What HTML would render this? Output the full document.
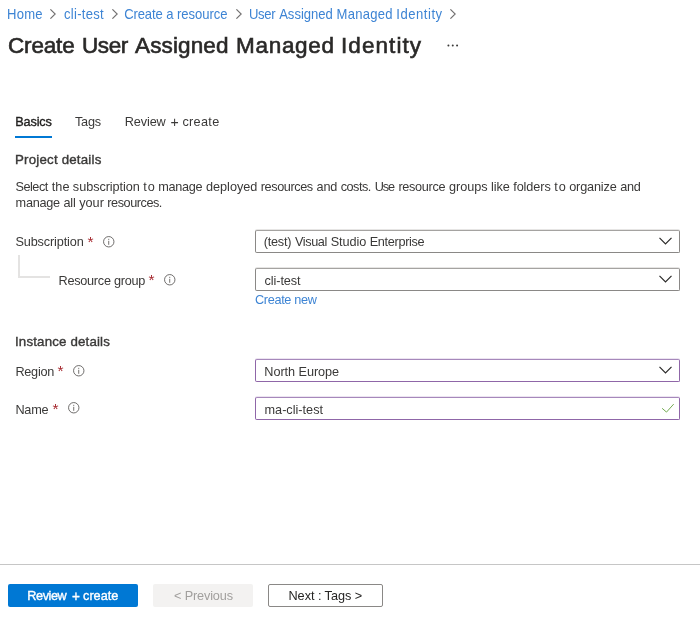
<!DOCTYPE html>
<html><head><meta charset="utf-8">
<style>
*{box-sizing:border-box;margin:0;padding:0}
html,body{width:700px;height:619px;background:#fff;overflow:hidden}
body{will-change:transform;filter:blur(0.4px);font-family:"Liberation Sans",sans-serif;color:#323130;position:relative;font-size:12.6px}
.t{position:absolute;white-space:nowrap;line-height:18px;font-size:13.5px;color:#3a3938;transform:scaleX(0.94);transform-origin:0 0}
.nt{transform:none}
.bc{color:#3d84d4;font-size:13.9px;top:5px}
.cv{position:absolute;top:8.6px;width:6px;height:10px}
.hh{top:31px;font-size:22.5px;line-height:30px;color:#2a2928}
.sb.hh{-webkit-text-stroke:0.62px currentColor}
.sb{-webkit-text-stroke:0.38px currentColor}
.req{position:absolute;color:#a4262c;font-size:15.5px;line-height:18px}
.info{position:absolute;width:12px;height:12px}
.box{position:absolute;left:255px;width:425px;height:23px;border:1px solid #8a8886;border-top-color:#a5a3a1;border-radius:2px;background:#fff;box-shadow:0 -1px 0 -0px #e6e5e4}
.box.p2{border-color:#8f66a8;border-top-color:#a688bb;box-shadow:0 -1px 0 0 #ece4f1}
.box svg{position:absolute}
.link{color:#3d84d4}
.foot{position:absolute;left:0;top:564px;width:700px;height:1px;background:#c6c6c6}
.btn{position:absolute;top:584px;height:23px;border-radius:2px}
</style></head><body>
<div id="b1" class="t bc" style="left:7px;letter-spacing:0.248px;transform:translate(0.00px,0.00px) scaleX(0.94)">Home</div>
<svg class="cv" style="left:50.4px" viewBox="0 0 6 10"><path d="M0.4 0.3 L5.2 5 L0.4 9.7" fill="none" stroke="#727070" stroke-width="1.1"/></svg>
<div id="b2" class="t bc" style="left:64px;letter-spacing:0.294px;transform:translate(0.00px,0.00px) scaleX(0.94)">cli-test</div>
<svg class="cv" style="left:111.5px" viewBox="0 0 6 10"><path d="M0.4 0.3 L5.2 5 L0.4 9.7" fill="none" stroke="#727070" stroke-width="1.1"/></svg>
<div id="b3w0" class="t bc" style="left:124px;letter-spacing:-0.170px;transform:translate(0.30px,0.00px) scaleX(0.94)">Create</div><div id="b3w1" class="t bc" style="left:166px;letter-spacing:-0.468px;transform:translate(0.37px,0.00px) scaleX(0.94)">a</div><div id="b3w2" class="t bc" style="left:176px;letter-spacing:-0.013px;transform:translate(0.88px,0.00px) scaleX(0.94)">resource</div>
<svg class="cv" style="left:236px" viewBox="0 0 6 10"><path d="M0.4 0.3 L5.2 5 L0.4 9.7" fill="none" stroke="#727070" stroke-width="1.1"/></svg>
<div id="b4w0" class="t bc" style="left:248px;letter-spacing:-0.343px;transform:translate(0.90px,0.00px) scaleX(0.94)">User</div><div id="b4w1" class="t bc" style="left:279px;letter-spacing:-0.006px;transform:translate(0.17px,0.00px) scaleX(0.94)">Assigned</div><div id="b4w2" class="t bc" style="left:336px;letter-spacing:0.291px;transform:translate(0.54px,0.00px) scaleX(0.94)">Managed</div><div id="b4w3" class="t bc" style="left:396px;letter-spacing:0.559px;transform:translate(0.31px,0.00px) scaleX(0.94)">Identity</div>
<svg class="cv" style="left:450px" viewBox="0 0 6 10"><path d="M0.4 0.3 L5.2 5 L0.4 9.7" fill="none" stroke="#727070" stroke-width="1.1"/></svg>

<div id="h1a" class="t sb hh nt" style="left:8px;letter-spacing:-0.166px">Create</div>
<div id="h1b" class="t sb hh nt" style="left:82px;letter-spacing:-0.409px">User</div>
<div id="h1c" class="t sb hh nt" style="left:135px;letter-spacing:0.133px">Assigned</div>
<div id="h1d" class="t sb hh nt" style="left:236px;letter-spacing:0.709px">Managed</div>
<div id="h1e" class="t sb hh nt" style="left:341px;letter-spacing:1.079px">Identity</div>
<svg style="position:absolute;left:446.5px;top:44px" width="12" height="3.2" viewBox="0 0 12 3.2"><circle cx="1.4" cy="1.6" r="1" fill="#3b3a39"/><circle cx="5.75" cy="1.6" r="1" fill="#3b3a39"/><circle cx="10.1" cy="1.6" r="1" fill="#3b3a39"/></svg>

<div id="t1" class="t sb" style="color:#201f1e;top:113px;left:15px;letter-spacing:-0.160px;transform:translate(0.23px,0.00px) scaleX(0.94)">Basics</div>
<div id="t2" class="t" style="top:113px;left:75px;letter-spacing:-0.267px;transform:translate(0.00px,0.00px) scaleX(0.94)">Tags</div>
<div id="t3a" class="t" style="top:113px;left:124px;letter-spacing:-0.141px;transform:translate(0.79px,0.00px) scaleX(0.94)">Review</div><div id="t3b" class="t" style="top:113px;letter-spacing:0px;left:170px;font-size:14.96px;transform:translate(0.43px,0.00px) scaleX(0.94)">+</div><div id="t3c" class="t" style="top:113px;left:182px;letter-spacing:0.328px;transform:translate(0.42px,0.00px) scaleX(0.94)">create</div>
<div style="position:absolute;left:15px;top:136px;width:37px;height:2px;background:#0078d4"></div>

<div id="s1" class="t sb nt" style="top:151px;font-size:13.3px;left:15px;letter-spacing:0.200px">Project details</div>
<div id="p1w0" class="t" style="top:178px;left:15px;letter-spacing:-0.559px;transform:translate(0.60px,0.00px) scaleX(0.94)">Select</div>
<div id="p1w1" class="t" style="top:178px;left:51px;letter-spacing:0.072px;transform:translate(0.67px,0.00px) scaleX(0.94)">the</div>
<div id="p1w2" class="t" style="top:178px;left:72px;letter-spacing:-0.072px;transform:translate(0.87px,0.00px) scaleX(0.94)">subscription</div>
<div id="p1w3" class="t" style="top:178px;left:143px;letter-spacing:0.990px;transform:translate(0.26px,0.00px) scaleX(0.94)">to</div>
<div id="p1w4" class="t" style="top:178px;left:158px;letter-spacing:-0.308px;transform:translate(0.20px,0.00px) scaleX(0.94)">manage</div>
<div id="p1w5" class="t" style="top:178px;left:206px;letter-spacing:-0.028px;transform:translate(0.03px,0.00px) scaleX(0.94)">deployed</div>
<div id="p1w6" class="t" style="top:178px;left:260px;letter-spacing:-0.443px;transform:translate(0.78px,0.00px) scaleX(0.94)">resources</div>
<div id="p1w7" class="t" style="top:178px;left:316px;letter-spacing:-0.250px;transform:translate(0.59px,0.00px) scaleX(0.94)">and</div>
<div id="p1w8" class="t" style="top:178px;left:340px;letter-spacing:-0.553px;transform:translate(0.72px,0.00px) scaleX(0.94)">costs.</div>
<div id="p1w9" class="t" style="top:178px;left:374px;letter-spacing:-1.173px;transform:translate(0.68px,0.00px) scaleX(0.94)">Use</div>
<div id="p1w10" class="t" style="top:178px;left:398px;letter-spacing:-0.346px;transform:translate(0.46px,0.00px) scaleX(0.94)">resource</div>
<div id="p1w11" class="t" style="top:178px;left:448px;letter-spacing:-0.037px;transform:translate(0.97px,0.00px) scaleX(0.94)">groups</div>
<div id="p1w12" class="t" style="top:178px;left:491px;letter-spacing:-0.110px;transform:translate(0.01px,0.00px) scaleX(0.94)">like</div>
<div id="p1w13" class="t" style="top:178px;left:513px;letter-spacing:-0.074px;transform:translate(0.17px,0.00px) scaleX(0.94)">folders</div>
<div id="p1w14" class="t" style="top:178px;left:554px;letter-spacing:1.000px;transform:translate(0.26px,0.00px) scaleX(0.94)">to</div>
<div id="p1w15" class="t" style="top:178px;left:569px;letter-spacing:-0.178px;transform:translate(0.20px,0.00px) scaleX(0.94)">organize</div>
<div id="p1w16" class="t" style="top:178px;left:620px;letter-spacing:-0.250px;transform:translate(0.14px,0.00px) scaleX(0.94)">and</div>
<div id="p2w0" class="t" style="top:194px;left:15px;letter-spacing:-0.308px;transform:translate(0.60px,0.00px) scaleX(0.94)">manage</div>
<div id="p2w1" class="t" style="top:194px;left:63px;letter-spacing:-0.173px;transform:translate(0.43px,0.00px) scaleX(0.94)">all</div>
<div id="p2w2" class="t" style="top:194px;left:79px;letter-spacing:0.000px;transform:translate(0.22px,0.00px) scaleX(0.94)">your</div>
<div id="p2w3" class="t" style="top:194px;left:107px;letter-spacing:-0.492px;transform:translate(0.32px,0.00px) scaleX(0.94)">resources.</div>

<div id="l1" class="t" style="top:233px;left:15px;letter-spacing:-0.143px;transform:translate(0.40px,0.00px) scaleX(0.94)">Subscription</div>
<div id="r1" class="req" style="left:87.5px;top:233px">*</div>
<svg class="info" style="left:103px;top:235.5px" viewBox="0 0 12 12"><circle cx="5.75" cy="5.75" r="5.2" fill="none" stroke="#605e5c" stroke-width="0.9"/><rect x="5.3" y="4.8" width="0.9" height="4" fill="#64625f"/><rect x="5.3" y="2.8" width="0.9" height="1.1" fill="#64625f"/></svg>
<div class="box" style="top:230px"><div id="v1w0" class="t" style="top:2px;left:7px;letter-spacing:-0.245px;transform:translate(0.70px,0.00px) scaleX(0.94)">(test)</div><div id="v1w1" class="t" style="top:2px;left:38px;letter-spacing:-0.402px;transform:translate(0.89px,0.00px) scaleX(0.94)">Visual</div><div id="v1w2" class="t" style="top:2px;left:74px;letter-spacing:-0.095px;transform:translate(0.75px,0.00px) scaleX(0.94)">Studio</div><div id="v1w3" class="t" style="top:2px;left:113px;letter-spacing:-0.345px;transform:translate(0.70px,0.00px) scaleX(0.94)">Enterprise</div><svg style="left:402.6px;top:6.3px" width="13" height="8" viewBox="0 0 13 8"><path d="M0.5 0.8 L6.5 6.8 L12.5 0.8" fill="none" stroke="#2b2a29" stroke-width="1.2"/></svg></div>

<div style="position:absolute;left:18px;top:255px;width:32px;height:23px;border-left:2px solid #e4e3e2;border-bottom:2px solid #e4e3e2"></div>
<div id="l2" class="t" style="top:272px;left:58px;letter-spacing:-0.284px;transform:translate(0.50px,0.00px) scaleX(0.94)">Resource group</div>
<div id="r2" class="req" style="left:148.5px;top:271px">*</div>
<svg class="info" style="left:164px;top:273.5px" viewBox="0 0 12 12"><circle cx="5.75" cy="5.75" r="5.2" fill="none" stroke="#605e5c" stroke-width="0.9"/><rect x="5.3" y="4.8" width="0.9" height="4" fill="#64625f"/><rect x="5.3" y="2.8" width="0.9" height="1.1" fill="#64625f"/></svg>
<div class="box" style="top:268px"><div id="v2" class="t" style="top:3px;left:8px;letter-spacing:-0.086px;transform:translate(0.50px,0.00px) scaleX(0.94)">cli-test</div><svg style="left:402.6px;top:6.3px" width="13" height="8" viewBox="0 0 13 8"><path d="M0.5 0.8 L6.5 6.8 L12.5 0.8" fill="none" stroke="#2b2a29" stroke-width="1.2"/></svg></div>
<div id="cn" class="t link" style="top:291px;left:255px;letter-spacing:-0.356px;transform:translate(0.00px,0.00px) scaleX(0.94)">Create new</div>

<div id="s2" class="t sb nt" style="top:333px;font-size:13.3px;left:15px;letter-spacing:0.162px">Instance details</div>
<div id="l3" class="t" style="top:363px;left:15px;letter-spacing:-0.280px;transform:translate(0.42px,0.00px) scaleX(0.94)">Region</div>
<div id="r3" class="req" style="left:57.5px;top:362px">*</div>
<svg class="info" style="left:73px;top:364.5px" viewBox="0 0 12 12"><circle cx="5.75" cy="5.75" r="5.2" fill="none" stroke="#605e5c" stroke-width="0.9"/><rect x="5.3" y="4.8" width="0.9" height="4" fill="#64625f"/><rect x="5.3" y="2.8" width="0.9" height="1.1" fill="#64625f"/></svg>
<div class="box p2" style="top:359px"><div id="v3" class="t" style="top:3px;left:8px;letter-spacing:-0.067px;transform:translate(0.34px,0.00px) scaleX(0.94)">North Europe</div><svg style="left:402.6px;top:6.3px" width="13" height="8" viewBox="0 0 13 8"><path d="M0.5 0.8 L6.5 6.8 L12.5 0.8" fill="none" stroke="#2b2a29" stroke-width="1.2"/></svg></div>

<div id="l4" class="t" style="top:401px;left:15px;letter-spacing:-0.227px;transform:translate(0.42px,0.00px) scaleX(0.94)">Name</div>
<div id="r4" class="req" style="left:52.5px;top:400px">*</div>
<svg class="info" style="left:67.5px;top:402.0px" viewBox="0 0 12 12"><circle cx="5.75" cy="5.75" r="5.2" fill="none" stroke="#605e5c" stroke-width="0.9"/><rect x="5.3" y="4.8" width="0.9" height="4" fill="#64625f"/><rect x="5.3" y="2.8" width="0.9" height="1.1" fill="#64625f"/></svg>
<div class="box p2" style="top:397px"><div id="v4" class="t" style="top:3px;left:8px;letter-spacing:0.000px;transform:translate(0.50px,0.00px) scaleX(0.94)">ma-cli-test</div><svg style="left:404px;top:4px" width="16" height="12" viewBox="0 0 16 12"><path d="M2.1 6.3 L6.5 10.1 L13.7 2.1" fill="none" stroke="#74ab52" stroke-width="1"/></svg></div>

<div class="foot"></div>
<div class="btn" style="left:8px;width:130px;background:#0078d4"></div>
<div id="k1a" class="t sb" style="color:#fff;top:587px;left:27px;letter-spacing:-0.485px;transform:translate(0.36px,0.00px) scaleX(0.94)">Review</div><div id="k1b" class="t sb" style="color:#fff;top:587px;letter-spacing:0px;left:71px;font-size:14.37px;transform:translate(0.92px,0.00px) scaleX(0.94)">+</div><div id="k1c" class="t sb" style="color:#fff;top:587px;left:83px;letter-spacing:-0.021px;transform:translate(0.07px,0.00px) scaleX(0.94)">create</div>
<div class="btn" style="left:153px;width:100px;background:#f3f2f1"></div>
<div id="k2" class="t" style="color:#a19f9d;top:587px;left:174px;letter-spacing:-0.155px;transform:translate(0.00px,0.00px) scaleX(0.94)">&lt; Previous</div>
<div class="btn" style="left:268px;width:115px;border:1px solid #8a8886;background:#fff"></div>
<div id="k3" class="t" style="color:#262524;top:587px;left:288px;letter-spacing:-0.050px;transform:translate(0.50px,0.00px) scaleX(0.94)">Next : Tags &gt;</div>
</body></html>
